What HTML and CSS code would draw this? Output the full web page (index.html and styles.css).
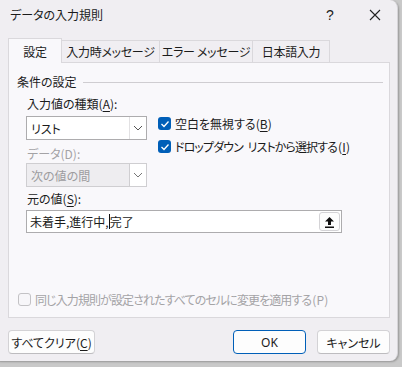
FILE: index.html
```html
<!DOCTYPE html>
<html lang="ja">
<head>
  <meta charset="UTF-8" />
  <title>データの入力規則</title>
  <link rel="stylesheet" href="styles.css">
</head>
<body>
<div class="dialog">
  <div class="titlebar">
    <span class="title">データの入力規則</span>
    <span class="help">?</span>
    <span class="close">
      <svg width="12" height="12" viewBox="0 0 12 12"><path d="M1 1 L11 11 M11 1 L1 11" stroke="#222" stroke-width="1.1"/></svg>
    </span>
  </div>

  <div class="tabs">
    <div class="tab active tab-1">設定</div>
    <div class="tab tab-2">入力時メッセージ</div>
    <div class="tab tab-3">エラー メッセージ</div>
    <div class="tab tab-4">日本語入力</div>
  </div>

  <div class="panel">
    <div class="group-title">
      <span>条件の設定</span>
      <span class="rule"></span>
    </div>

    <div class="label first">入力値の種類(<u>A</u>):</div>
    <div class="criteria">
      <div class="criteria-left">
        <div class="select">
          <span class="select-text">リスト</span>
          <span class="select-arrow">
            <svg width="10" height="6" viewBox="0 0 10 6"><path d="M1 1 L5 5 L9 1" fill="none" stroke="#555" stroke-width="1"/></svg>
          </span>
        </div>

        <div class="label disabled">データ(D):</div>
        <div class="select disabled-select">
          <span class="select-text">次の値の間</span>
          <span class="select-arrow">
            <svg width="10" height="6" viewBox="0 0 10 6"><path d="M1 1 L5 5 L9 1" fill="none" stroke="#777" stroke-width="1"/></svg>
          </span>
        </div>
      </div>

      <div class="checks">
        <label class="check"><span class="box on"><svg width="10" height="8" viewBox="0 0 10 8"><path d="M1.5 4 L4 6.5 L8.5 1.5" fill="none" stroke="#fff" stroke-width="1.3"/></svg></span>空白を無視する(<u>B</u>)</label>
        <label class="check tight"><span class="box on"><svg width="10" height="8" viewBox="0 0 10 8"><path d="M1.5 4 L4 6.5 L8.5 1.5" fill="none" stroke="#fff" stroke-width="1.3"/></svg></span>ドロップダウン リストから選択する<span class="paren">(<u>I</u>)</span></label>
      </div>
    </div>

    <div class="label">元の値(<u>S</u>):</div>
    <div class="source">
      <span class="source-text">未着手,進行中,<span class="caret"></span>完了</span>
      <span class="pick">
        <svg width="11" height="12" viewBox="0 0 11 12"><path d="M5.5 1 L1 5.5 H4 V9 H7 V5.5 H10 Z" fill="#111"/><rect x="1" y="10.5" width="9" height="1.5" fill="#111"/></svg>
      </span>
    </div>

    <label class="check apply tight"><span class="box off"></span>同じ入力規則が設定されたすべてのセルに変更を適用する<span class="paren">(P)</span></label>
  </div>

  <div class="buttons">
    <button class="btn clear">すべてクリア(<u>C</u>)</button>
    <span class="spacer"></span>
    <button class="btn ok">OK</button>
    <button class="btn">キャンセル</button>
  </div>
</div>
</body>
</html>
```

FILE: styles.css
```css
body {
  margin: 0;
  height: 367px;
  overflow: hidden;
  background-color: #c9c9c9;
  font-family: "Noto Sans CJK JP", "Liberation Sans", sans-serif;
  font-feature-settings: "palt";
  font-size: 12px;
  color: #1b1b1b;
}

u {
  text-decoration: underline;
  text-underline-offset: 2px;
}

.dialog {
  width: 406px;
  height: 361px;
  margin-left: -8px;
  background-color: #f0eef2;
  border-radius: 8px;
  box-sizing: border-box;
  border-right: 1px solid #d6d4d8;
  box-shadow: 1px 1px 2px rgba(0, 0, 0, 0.25);
}

.titlebar {
  height: 29px;
  display: flex;
  align-items: center;
  padding-left: 18px;
}

.title {
  flex: 1;
  font-size: 12px;
}

.help {
  width: 46px;
  text-align: center;
  font-family: "Liberation Sans", sans-serif;
  font-size: 14px;
}

.close {
  width: 44px;
  display: flex;
  justify-content: center;
}

.tabs {
  display: flex;
  align-items: flex-end;
  padding-left: 16px;
  margin-top: 9px;
  height: 24px;
}

.tab {
  height: 22px;
  box-sizing: border-box;
  border: 1px solid #dad8dc;
  border-bottom: none;
  border-left: none;
  display: flex;
  align-items: center;
  justify-content: center;
  background-color: #f0eef2;
  font-size: 12px;
  letter-spacing: -0.3px;
}

.tab.active {
  height: 25px;
  margin-bottom: -1px;
  background-color: #f9f8fb;
  border-left: 1px solid #dad8dc;
  position: relative;
  z-index: 1;
}

.tab-1 { width: 54px; }
.tab-2 { width: 98px; }
.tab-3 { width: 93px; }
.tab-4 { width: 77px; }

.panel {
  margin-left: 16px;
  width: 382px;
  height: 256px;
  box-sizing: border-box;
  border: 1px solid #dad8dc;
  background-color: #f9f8fb;
  padding: 9px 0 0 8px;
  display: flex;
  flex-direction: column;
}

.group-title {
  display: flex;
  align-items: center;
  height: 18px;
}

.group-title .rule {
  flex: 1;
  height: 1px;
  background-color: #cfcdd1;
  margin: 2px 6px 0 6px;
}

.label {
  height: 18px;
  line-height: 18px;
  padding-left: 10px;
  margin-top: 3px;
}

.label.first {
  margin-top: 5px;
}

.label.disabled {
  color: #a4a3a6;
  margin-top: 5px;
  padding-left: 1px;
}

.criteria {
  display: flex;
  margin-top: 3px;
  padding-left: 9px;
}

.criteria-left {
  display: flex;
  flex-direction: column;
}

.select {
  width: 121px;
  height: 24px;
  box-sizing: border-box;
  border: 1px solid #adacae;
  background-color: #fff;
  display: flex;
  align-items: center;
}

.select-text {
  flex: 1;
  padding-left: 4px;
}

.select-arrow {
  width: 16px;
  height: 22px;
  border-left: 1px solid #e2e1e3;
  display: flex;
  align-items: center;
  justify-content: center;
}

.disabled-select {
  background-color: #eeedf0;
  border-color: #cfced1;
  color: #9d9c9f;
}

.disabled-select .select-arrow {
  background-color: #fff;
  border-left-color: #cfced1;
}

.checks {
  display: flex;
  flex-direction: column;
  gap: 4px;
  margin-left: 11px;
  margin-top: -2px;
}

.check {
  display: flex;
  align-items: center;
  height: 19px;
  white-space: pre;
}

.check.tight {
  letter-spacing: -0.9px;
  word-spacing: 3px;
}

.paren {
  letter-spacing: 0.2px;
  margin-left: 1px;
}

.box {
  width: 13px;
  height: 13px;
  box-sizing: border-box;
  border-radius: 3px;
  margin-right: 4px;
  display: flex;
  align-items: center;
  justify-content: center;
}

.box.on {
  background-color: #005fb8;
}

.box.off {
  border: 1px solid #c3c2c5;
  background-color: #f7f6f9;
}

.source {
  width: 316px;
  height: 23px;
  margin-left: 9px;
  margin-top: 2px;
  box-sizing: border-box;
  border: 1px solid #adacae;
  background-color: #fff;
  display: flex;
  align-items: center;
}

.source-text {
  flex: 1;
  padding-left: 3px;
  display: flex;
  align-items: center;
}

.caret {
  display: inline-block;
  width: 1px;
  height: 15px;
  background-color: #111;
}

.pick {
  width: 21px;
  height: 19px;
  margin-right: 1px;
  box-sizing: border-box;
  border: 1px solid #d4d3d6;
  border-radius: 3px;
  background-color: #fdfdfd;
  display: flex;
  align-items: center;
  justify-content: center;
}

.apply {
  margin-top: auto;
  margin-bottom: 8px;
  color: #a4a3a6;
  padding-left: 1px;
}

.buttons {
  display: flex;
  padding: 12px 7px 0 16px;
  gap: 11px;
}

.spacer {
  flex: 1;
}

.btn {
  height: 24px;
  width: 73px;
  box-sizing: border-box;
  border: 1px solid #d3d2d5;
  border-bottom-color: #bdbcbf;
  border-radius: 4px;
  background-color: #fdfdfd;
  font-family: inherit;
  font-feature-settings: "palt";
  font-size: 12px;
  color: #1b1b1b;
  padding: 0;
}

.btn.clear {
  width: 87px;
}

.btn.ok {
  border: 1px solid #005fb8;
  font-family: "Noto Sans", sans-serif;
}
```
